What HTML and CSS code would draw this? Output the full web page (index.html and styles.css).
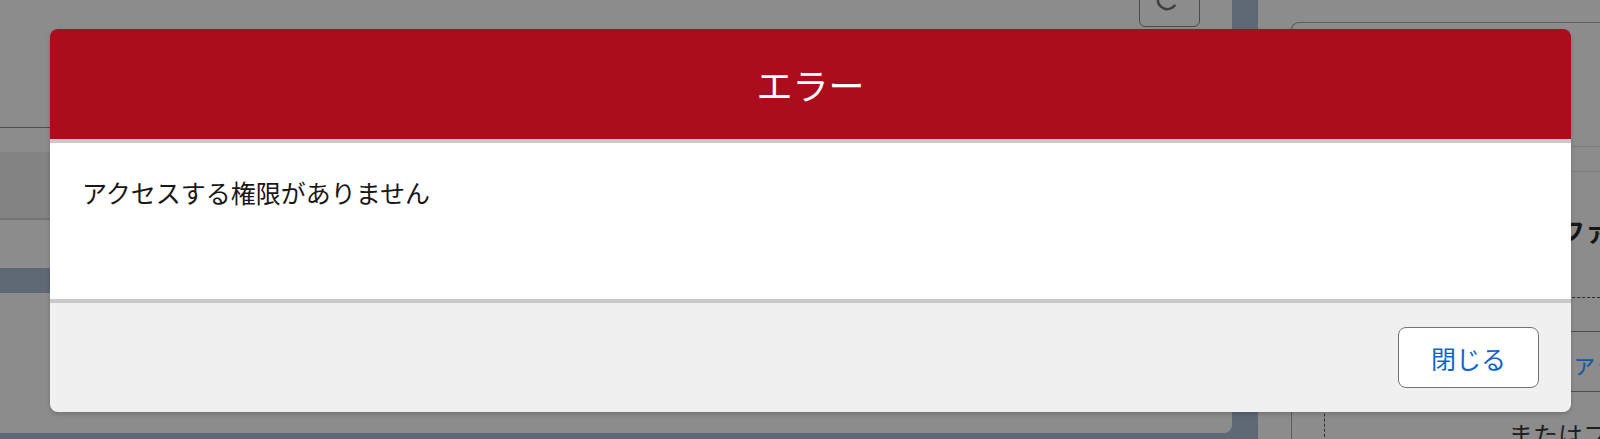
FILE: index.html
```html
<!DOCTYPE html>
<html lang="ja">
<head>
<meta charset="utf-8">
<title>エラー</title>
<link rel="stylesheet" href="styles.css">
</head>
<body>
<div class="app">
  <div class="main-col">
    <div class="card card-top">
      <div class="toolbar">
        <button class="refresh-btn" type="button" aria-label="更新">
          <svg width="61" height="40" viewBox="0 0 61 40" aria-hidden="true">
            <path d="M35.7 18.6 A9.5 9.5 0 1 1 35.5 6.5" fill="none" stroke="#3e3e3e" stroke-width="2.4" stroke-linecap="round"/>
          </svg>
        </button>
      </div>
      <div class="list-head"></div>
      <div class="thead"></div>
    </div>
    <div class="card card-bottom"></div>
  </div>
  <aside class="side">
    <div class="side-card">
      <div class="side-head"></div>
      <div class="side-tabs"></div>
      <div class="side-title">ファイル</div>
      <div class="dropzone">
        <div class="upload-btn">ファイルをアップロード</div>
        <div class="drop-or">またはファイルをドロップ</div>
      </div>
    </div>
  </aside>
</div>

<section class="modal" role="dialog" aria-labelledby="modal-title">
  <header class="modal-header">
    <h2 id="modal-title" class="modal-title">エラー</h2>
  </header>
  <div class="modal-body">
    <p class="modal-text">アクセスする権限がありません</p>
  </div>
  <footer class="modal-footer">
    <button class="btn-close" type="button">閉じる</button>
  </footer>
</section>
</body>
</html>
```

FILE: styles.css
```css
* { box-sizing: border-box; }

html, body {
  margin: 0;
  padding: 0;
  height: 439px;
  overflow: hidden;
}

body {
  background: #5f6875;
  font-family: "Noto Sans CJK JP", "Noto Sans", sans-serif;
  position: relative;
}

/* ---------- dimmed application behind the modal ---------- */
.app {
  display: flex;
  gap: 26px;
  height: 439px;
}

.main-col {
  flex: 0 0 1232px;
  width: 1232px;
  display: flex;
  flex-direction: column;
  gap: 25px;
}

.card {
  background: #8c8c8c;
}

.card-top {
  height: 268px;
  flex: none;
  display: flex;
  flex-direction: column;
}

.toolbar {
  height: 27px;
  flex: none;
  display: flex;
  justify-content: flex-end;
  align-items: flex-end;
  padding-right: 32px;
}

.refresh-btn {
  flex: none;
  width: 61px;
  height: 40px;
  padding: 0;
  border: 1px solid #4b4b4b;
  border-radius: 6px;
  background: #8c8c8c;
  display: block;
}

.refresh-btn svg {
  display: block;
  margin: -1px;
}

.list-head {
  height: 101px;
  flex: none;
  border-bottom: 1px solid #4e4e4e;
}

.thead {
  margin-top: 24px;
  height: 68px;
  flex: none;
  background: #838383;
  border-bottom: 2px solid #747474;
}

.card-bottom {
  height: 140px;
  flex: none;
  border-radius: 0 0 8px 0;
}

.side {
  flex: 1 1 auto;
  min-width: 0;
  overflow: hidden;
  background: #8c8c8c;
  padding: 22px 0 0 33px;
}

.side-card {
  height: 100%;
  border: 1px solid #5e5e5e;
  border-right: none;
  border-bottom: none;
  border-radius: 8px 0 0 0;
}

.side-head {
  height: 124px;
  border-bottom: 1px solid #7b7b7b;
}

.side-tabs {
  height: 25px;
  border-bottom: 1px solid #7b7b7b;
}

.side-title {
  height: 125px;
  padding: 40px 0 0 268px;
  font-size: 25px;
  line-height: 36px;
  font-weight: 700;
  color: #161616;
  white-space: nowrap;
}

.dropzone {
  margin-left: 32px;
  border: 1px dashed #2e2e2e;
  border-right: none;
  border-bottom: none;
  padding-top: 33px;
}

.upload-btn {
  margin-left: 150px;
  height: 61px;
  border: 1px solid #4e4e4e;
  border-right: none;
  border-radius: 6px 0 0 6px;
  padding-left: 71px;
  display: flex;
  align-items: center;
  font-size: 25px;
  color: #15589e;
  white-space: nowrap;
}

.drop-or {
  margin-top: 24px;
  padding-left: 183px;
  font-size: 25px;
  line-height: 36px;
  color: #1e1e1e;
  white-space: nowrap;
}

/* ---------- modal ---------- */
.modal {
  position: absolute;
  top: 29px;
  left: 50px;
  width: 1521px;
  border-radius: 8px;
  box-shadow: 0 2px 4px rgba(0, 0, 0, 0.18);
}

.modal-header {
  height: 114px;
  background: #ac0d1d;
  border-bottom: 4px solid #c9c9c9;
  border-radius: 8px 8px 0 0;
  display: flex;
  align-items: center;
  justify-content: center;
}

.modal-title {
  margin: 0;
  font-size: 36px;
  line-height: 44px;
  font-weight: 400;
  color: #ffffff;
}

.modal-body {
  height: 160px;
  background: #ffffff;
  border-bottom: 4px solid #c9c9c9;
  padding: 31px 32px 0 32px;
}

.modal-text {
  margin: 0;
  font-size: 25px;
  line-height: 37px;
  color: #181818;
}

.modal-footer {
  height: 109px;
  background: #f0f0f0;
  border-radius: 0 0 8px 8px;
  display: flex;
  justify-content: flex-end;
  align-items: center;
  padding: 0 32px;
}

.btn-close {
  width: 141px;
  height: 61px;
  border: 1px solid #747474;
  border-radius: 8px;
  background: #ffffff;
  font-family: "Noto Sans CJK JP", "Noto Sans", sans-serif;
  font-size: 25px;
  color: #0b66cc;
  padding: 0;
}
```
